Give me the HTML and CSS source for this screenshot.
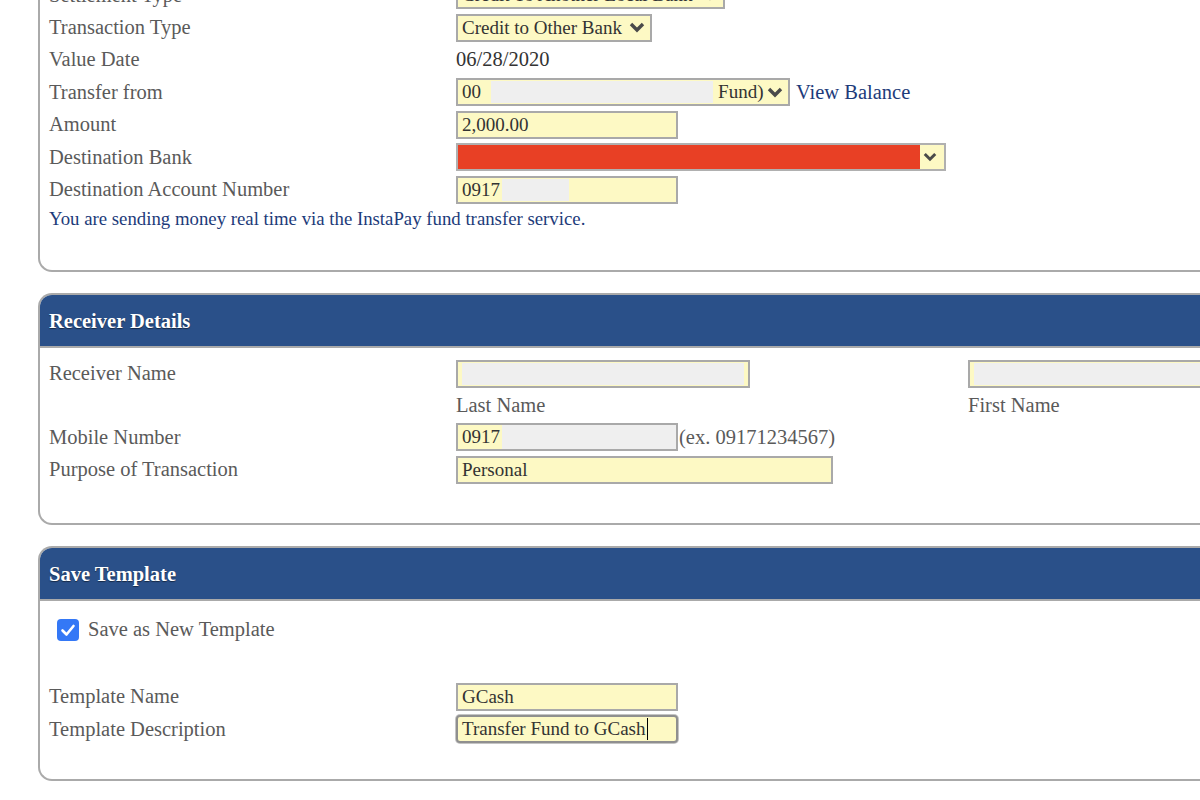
FILE: index.html
```html
<!DOCTYPE html>
<html>
<head>
  <meta charset="UTF-8">
  <title>Fund Transfer</title>
  <link rel="stylesheet" href="styles.css">
</head>
<body>
<div class="page">

<div class="panel panel-first">
  <div class="panel-body body-first">
    <div class="row">
      <div class="label">Settlement Type</div>
      <div class="select w-settle">Credit To Another Local Bank <svg class="chev" viewBox="0 0 16 11"><path d="M2 2 L8 8 L14 2"/></svg></div>
    </div>
    <div class="row">
      <div class="label">Transaction Type</div>
      <div class="select w-type">Credit to Other Bank <svg class="chev" viewBox="0 0 16 11"><path d="M2 2 L8 8 L14 2"/></svg></div>
    </div>
    <div class="row">
      <div class="label">Value Date</div>
      <div class="value">06/28/2020</div>
    </div>
    <div class="row">
      <div class="label">Transfer from</div>
      <div class="select w-from">00<span class="blur blur-from"></span>Fund) <svg class="chev" viewBox="0 0 16 11"><path d="M2 2 L8 8 L14 2"/></svg></div>
      <a class="link" href="#">View Balance</a>
    </div>
    <div class="row">
      <div class="label">Amount</div>
      <div class="field w-short">2,000.00</div>
    </div>
    <div class="row">
      <div class="label">Destination Bank</div>
      <div class="select select-bank w-bank"><span class="bank-fill"></span><svg class="chev chev-small" viewBox="0 0 16 11"><path d="M2 2 L8 8 L14 2"/></svg></div>
    </div>
    <div class="row">
      <div class="label">Destination Account Number</div>
      <div class="field w-short">0917<span class="blur blur-acct"></span></div>
    </div>
    <div class="note">You are sending money real time via the InstaPay fund transfer service.</div>
  </div>
</div>

<div class="panel">
  <div class="panel-head">Receiver Details</div>
  <div class="panel-body body-receiver">
    <div class="row">
      <div class="label">Receiver Name</div>
      <div class="name-col"><div class="field w-name"><span class="blur blur-name"></span></div></div>
      <div class="field w-first"><span class="blur blur-first"></span></div>
    </div>
    <div class="row row-sub">
      <div class="label"></div>
      <div class="name-col sub">Last Name</div>
      <div class="sub">First Name</div>
    </div>
    <div class="row">
      <div class="label">Mobile Number</div>
      <div class="field w-short">0917<span class="blur blur-mobile"></span></div>
      <span class="hint">(ex. 09171234567)</span>
    </div>
    <div class="row">
      <div class="label">Purpose of Transaction</div>
      <div class="field w-purpose">Personal</div>
    </div>
  </div>
</div>

<div class="panel">
  <div class="panel-head">Save Template</div>
  <div class="panel-body body-template">
    <div class="check-row">
      <span class="checkbox"><svg viewBox="0 0 22 22"><path d="M5.5 11.5 L9.5 15.5 L16.5 7"/></svg></span>
      <span class="check-label">Save as New Template</span>
    </div>
    <div class="row">
      <div class="label">Template Name</div>
      <div class="field w-short">GCash</div>
    </div>
    <div class="row">
      <div class="label">Template Description</div>
      <div class="field field-focus w-short">Transfer Fund to GCash<span class="caret"></span></div>
    </div>
  </div>
</div>

</div>
</body>
</html>
```

FILE: styles.css
```css
html, body {
  margin: 0;
  overflow: hidden;
  background: #fff;
}
body {
  font-family: "Liberation Serif", "Times New Roman", serif;
  font-size: 20.5px;
  color: #5a5a5a;
}
.page {
  display: flow-root;
  width: 1220px;
}
.panel {
  margin-left: 38px;
  margin-top: 21px;
  border: 2px solid #aaaaaa;
  border-right: none;
  border-radius: 14px 0 0 14px;
  overflow: hidden;
}
.panel-first {
  margin-top: -21px;
  border-top: none;
  border-top-left-radius: 0;
}
.panel-head {
  height: 51px;
  line-height: 53px;
  padding-left: 9px;
  background: #2a5089;
  border-bottom: 2px solid #aaaaaa;
  color: #fff;
  font-weight: bold;
  font-size: 20.5px;
  text-shadow: 0 1px 1px rgba(0, 0, 0, 0.5);
}
.panel-body {
  padding-left: 9px;
}
.body-first {
  padding-bottom: 38px;
}
.body-receiver {
  padding-top: 10px;
  padding-bottom: 37px;
}
.body-template {
  padding-top: 14px;
  padding-bottom: 34px;
}
.row {
  display: flex;
  align-items: center;
  height: 32.4px;
}
.row-sub {
  height: 31px;
}
.label {
  width: 407px;
  flex-shrink: 0;
}
.value {
  color: #333;
}
.field, .select {
  box-sizing: border-box;
  height: 28px;
  display: flex;
  align-items: center;
  padding-left: 4px;
  background: #fdf9c4;
  border: 2px solid #a9a9a9;
  color: #333;
  font-size: 19px;
  white-space: nowrap;
  overflow: hidden;
}
.select {
  justify-content: space-between;
  padding-right: 5px;
}
.chev {
  width: 16px;
  height: 11px;
  flex-shrink: 0;
}
.chev path {
  fill: none;
  stroke: #4a4a4a;
  stroke-width: 3.4;
}
.chev-small {
  width: 14px;
  height: 10px;
  margin-right: 2px;
}
.blur {
  display: inline-block;
  height: 22px;
  background: #efefef;
}
.blur-from { width: 222px; margin-left: 6px; margin-right: 2px; flex-shrink: 0; }
.blur-acct { width: 67px; margin-left: 2px; }
.blur-name { width: 282px; }
.blur-first { width: 240px; }
.blur-mobile { width: 177px; margin-left: 2px; height: 24px; }
.w-settle { width: 269px; }
.w-type { width: 196px; }
.w-from { width: 334px; }
.w-short { width: 222px; }
.w-name { width: 294px; }
.w-first { width: 260px; }
.w-purpose { width: 377px; }
.w-bank { width: 490px; }
.select-bank {
  padding: 0;
  padding-right: 5px;
  border-color: #b0b0b0;
}
.bank-fill {
  align-self: stretch;
  width: 464px;
  margin: -2px 0 -2px -2px;
  background: #e84025;
}
.link {
  margin-left: 6px;
  color: #1d3b7a;
  text-decoration: none;
}
.note {
  height: 26px;
  line-height: 26px;
  font-size: 18.8px;
  color: #1d3b7a;
}
.name-col {
  width: 512px;
  flex-shrink: 0;
}
.sub {
  color: #5a5a5a;
}
.hint {
  color: #5a5a5a;
  margin-left: 1px;
}
.check-row {
  display: flex;
  align-items: center;
  height: 30px;
  margin-bottom: 35.8px;
}
.checkbox {
  width: 22px;
  height: 22px;
  margin-left: 8px;
  margin-right: 9px;
  border-radius: 4px;
  background: #3478f6;
}
.checkbox svg {
  display: block;
  width: 22px;
  height: 22px;
}
.checkbox path {
  fill: none;
  stroke: #fff;
  stroke-width: 2.6;
  stroke-linecap: round;
  stroke-linejoin: round;
}
.field-focus {
  border-color: #8f8f8f;
  border-radius: 4px;
  box-shadow: 0 0 0 1px #c4c4c4;
}
.caret {
  display: inline-block;
  width: 1px;
  height: 22px;
  background: #000;
  margin-left: 1px;
}
```
